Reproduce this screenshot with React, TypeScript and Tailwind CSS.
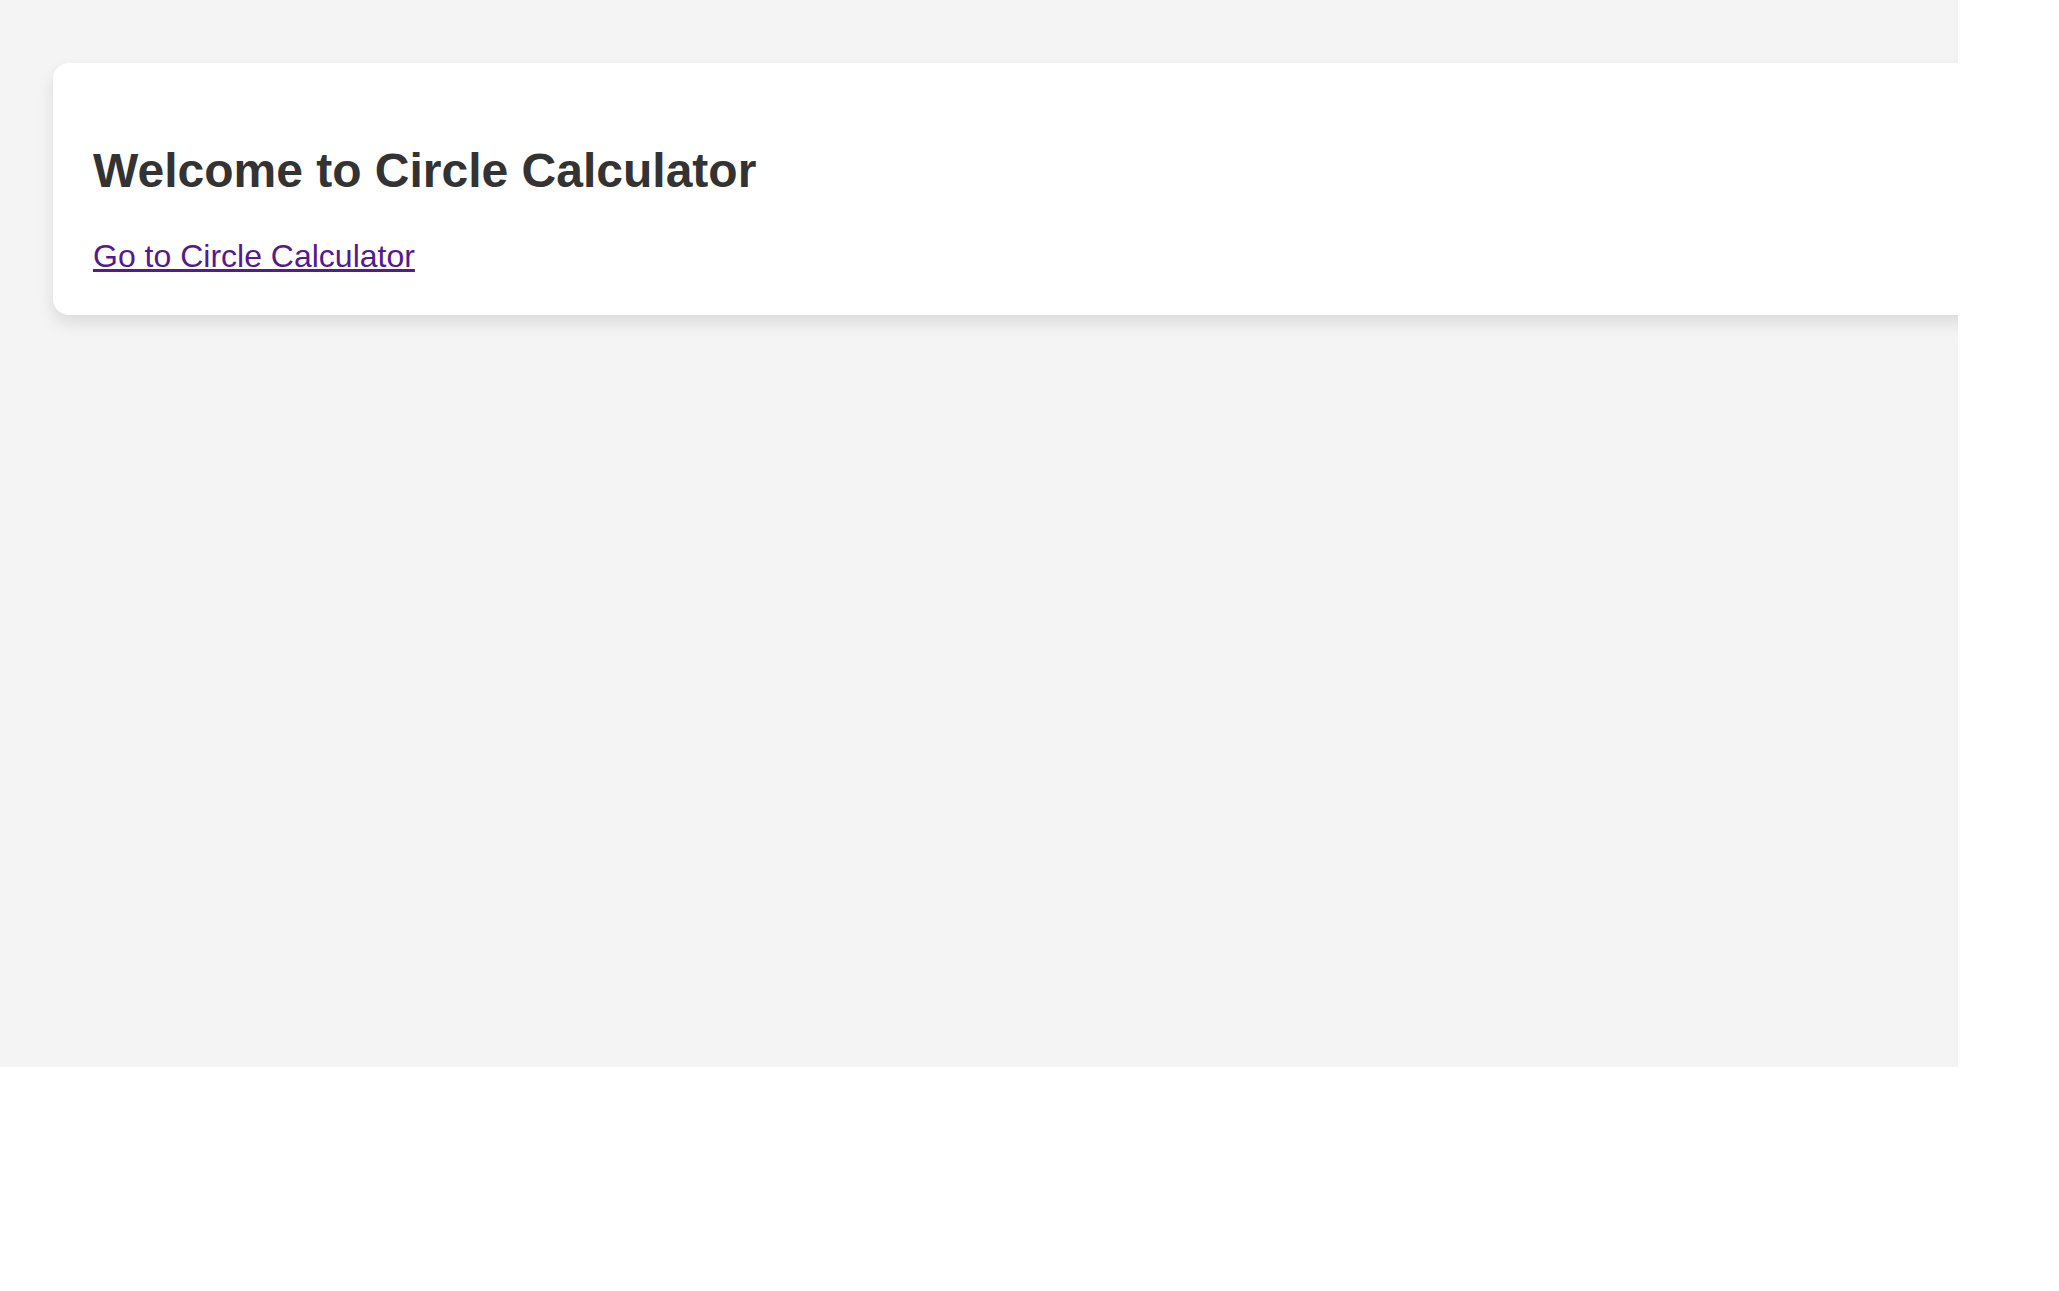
import React from "react";

export default function App() {
  return (
    <div className="w-[2059px] h-[1291px] bg-white" style={{ fontFamily: '"Liberation Sans", Arial, sans-serif' }}>
      <div className="w-[1958px] h-[1067px] bg-[#f4f4f4] overflow-hidden pt-[63px] pl-[53px]">
        <div className="w-[1960px] bg-white rounded-[16px] shadow-[0_8px_16px_rgba(0,0,0,0.1)] pl-[40px] pt-[81px] pb-[40px]">
          <h1 className="text-[48px] leading-[54px] font-bold text-[#333333] m-0">Welcome to Circle Calculator</h1>
          <p className="mt-[40px] text-[32px] leading-[37px]">
            <a href="#" className="text-[#551a8b] underline">Go to Circle Calculator</a>
          </p>
        </div>
      </div>
    </div>
  );
}
